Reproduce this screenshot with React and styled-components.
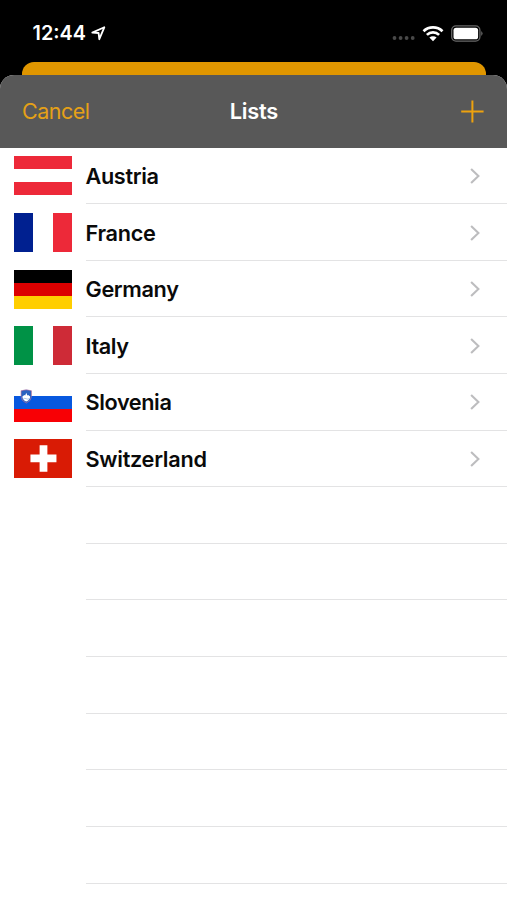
import React from 'react';
import styled, { createGlobalStyle } from 'styled-components';

const GlobalStyle = createGlobalStyle`
  * { box-sizing: border-box; }
  html, body { margin: 0; padding: 0; background: #fff; }
  body { overflow: hidden; }
`;

const Screen = styled.div`
  width: 507px;
  height: 900px;
  overflow: hidden;
  background: #000;
  font-family: Inter, 'Liberation Sans', sans-serif;
`;

const StatusBar = styled.header`
  height: 62px;
  padding: 4px 24px 0 32.6px;
  display: flex;
  align-items: center;
  justify-content: space-between;
  color: #fff;
`;

const StatusGroup = styled.div`
  display: flex;
  align-items: center;
`;

const Time = styled.span`
  width: 54.4px;
  font-size: 19.8px;
  line-height: 24px;
  font-weight: 600;
  white-space: nowrap;
`;

const LocationIcon = styled.svg`
  width: 15px;
  height: 15px;
  margin-left: 4px;
`;

const SignalIcon = styled.svg`
  width: 24px;
  height: 6px;
  margin: 10px 6px 0 0;
`;

const WifiIcon = styled.svg`
  width: 22px;
  height: 17px;
  margin-right: 7px;
`;

const BatteryIcon = styled.svg`
  width: 32px;
  height: 17px;
`;

const BackCard = styled.div`
  height: 13px;
  margin: 0 21px 0 22px;
  border-radius: 12px 12px 0 0;
  background: #e09600;
`;

const Sheet = styled.main`
  height: 825px;
  border-radius: 14px 14px 0 0;
  overflow: hidden;
  background: #fff;
`;

const NavBar = styled.nav`
  height: 72.6px;
  padding: 0 23px 0 22px;
  display: grid;
  grid-template-columns: 1fr auto 1fr;
  align-items: center;
  background: #585858;
`;

const CancelButton = styled.button`
  justify-self: start;
  padding: 0;
  border: 0;
  background: none;
  color: #e6a117;
  font: 400 21.5px/28px Inter, 'Liberation Sans', sans-serif;
  letter-spacing: -0.5px;
`;

const Title = styled.h1`
  margin: 0;
  padding-left: 1.5px;
  color: #fff;
  font-size: 21.8px;
  line-height: 28px;
  font-weight: 600;
  letter-spacing: -0.25px;
`;

const AddButton = styled.button`
  justify-self: end;
  display: flex;
  padding: 0;
  border: 0;
  background: none;
  color: #eda20e;
`;

const List = styled.ul`
  margin: 0;
  padding: 0;
  list-style: none;
`;

const Row = styled.li`
  height: 56.62px;
  padding-left: 13.5px;
  display: flex;
  align-items: center;
`;

const FlagSlot = styled.div`
  width: 72px;
  flex: none;
  display: flex;
  align-items: center;
`;

const RowContent = styled.div`
  flex: 1;
  height: 100%;
  padding: 1.3px 26px 0 0;
  display: flex;
  align-items: center;
  justify-content: space-between;
  border-bottom: 1px solid #e3e3e4;
`;

const Country = styled.span`
  color: #0a0a0a;
  font-size: 21.7px;
  line-height: 28px;
  font-weight: 600;
  letter-spacing: ${(p) => p.$tracking};
`;

const Stripes = styled.div`
  width: 58.8px;
  height: 39px;
  display: flex;
  flex-direction: ${(p) => (p.$vertical ? 'row' : 'column')};
`;

const Stripe = styled.span`
  flex: 1;
  background: ${(p) => p.$color};
`;

function StripedFlag({ colors, vertical }) {
  return (
    <Stripes $vertical={vertical}>
      {colors.map((color, i) => <Stripe key={i} $color={color} />)}
    </Stripes>
  );
}

function SloveniaFlag() {
  return (
    <svg width="58.8" height="39" viewBox="0 0 59 39">
      <path fill="#0758df" d="M0 13h59v13H0z" />
      <path fill="#f80005" d="M0 26h59v13H0z" />
      <path fill="#2a62c0" stroke="#c0709a" strokeWidth=".6" d="M7.1 7.7Q12.3 5.9 17.5 7.7v5.8q0 4.3-5.2 6.6-5.2-2.3-5.2-6.6z" />
      <path fill="#fff" d="m8.4 13.4 2-1.4.8.6 1.1-2.8 1.1 2.8.8-.6 2 1.4q-.2 3.5-3.9 5.2-3.7-1.7-3.9-5.2z" />
      <path fill="none" stroke="#7ba0d8" strokeWidth=".6" d="M9.4 15.7q1.5-.8 2.9 0t2.9 0" />
    </svg>
  );
}

function SwissFlag() {
  return (
    <svg width="58.8" height="39" viewBox="0 0 59 39">
      <path fill="#d91b05" d="M0 0h59v39H0z" />
      <path fill="#fff" d="M25.7 6.3h7.8v9.2h9.1v7.8h-9.1v9.4h-7.8v-9.4h-9.2v-7.8h9.2z" />
    </svg>
  );
}

function Chevron() {
  return (
    <svg width="12" height="18" viewBox="0 0 12 18" fill="none" stroke="#bdbdbf" strokeWidth="2.1">
      <path d="m2.1 2.1 7.3 7-7.3 7" />
    </svg>
  );
}

const countries = [
  { name: 'Austria', tracking: '-.35px', flag: <StripedFlag colors={['#ed2939', '#fff', '#ed2939']} /> },
  { name: 'France', tracking: '-.3px', flag: <StripedFlag vertical colors={['#002090', '#fff', '#ed2939']} /> },
  { name: 'Germany', tracking: '-.35px', flag: <StripedFlag colors={['#000', '#dc0000', '#ffce00']} /> },
  { name: 'Italy', tracking: '-.4px', flag: <StripedFlag vertical colors={['#009246', '#fff', '#ce2b37']} /> },
  { name: 'Slovenia', tracking: '-.4px', flag: <SloveniaFlag /> },
  { name: 'Switzerland', tracking: '-.28px', flag: <SwissFlag /> },
];

const emptyRows = Array.from({ length: 8 }, (_, i) => i);

export default function App() {
  return (
    <>
      <GlobalStyle />
      <Screen>
        <StatusBar>
          <StatusGroup>
            <Time>12:44</Time>
            <LocationIcon viewBox="0 0 15 15" fill="none" stroke="#fff" strokeWidth="1.8" strokeLinejoin="round">
              <path d="M1.3 6.6 13.3 1.3 8.3 13.2 7.6 7z" />
            </LocationIcon>
          </StatusGroup>
          <StatusGroup>
            <SignalIcon viewBox="0 0 24 6" fill="#494949">
              <circle cx="2.5" cy="3" r="1.9" />
              <circle cx="8.6" cy="3" r="1.9" />
              <circle cx="14.6" cy="3" r="1.9" />
              <circle cx="20.7" cy="3" r="1.9" />
            </SignalIcon>
            <WifiIcon viewBox="0 0 22 17" fill="none" stroke="#fff" strokeWidth="2.7">
              <path d="M1.5 6.2a13.7 13.7 0 0 1 19 0M4.9 9.9a8.8 8.8 0 0 1 12.2 0" />
              <path fill="#fff" stroke="none" d="M7.4 12.6a5.2 5.2 0 0 1 7.2 0L11 16.2z" />
            </WifiIcon>
            <BatteryIcon viewBox="0 0 32 17">
              <rect x=".7" y=".9" width="28.2" height="15.2" rx="4.3" fill="none" stroke="#686868" strokeWidth="1.3" />
              <rect x="2.5" y="2.7" width="24.6" height="11.6" rx="2.6" fill="#fff" />
              <path fill="#747474" d="M30.3 6q2.4 2.5 0 5z" />
            </BatteryIcon>
          </StatusGroup>
        </StatusBar>
        <BackCard />
        <Sheet>
          <NavBar>
            <CancelButton>Cancel</CancelButton>
            <Title>Lists</Title>
            <AddButton aria-label="Add list">
              <svg width="23" height="23" viewBox="0 0 23 23" stroke="currentColor" strokeWidth="2">
                <path d="M.2 11.5h22.4M11.4.4v22.2" />
              </svg>
            </AddButton>
          </NavBar>
          <List>
            {countries.map(({ name, tracking, flag }) => (
              <Row key={name}>
                <FlagSlot>{flag}</FlagSlot>
                <RowContent>
                  <Country $tracking={tracking}>{name}</Country>
                  <Chevron />
                </RowContent>
              </Row>
            ))}
            {emptyRows.map((i) => (
              <Row key={i}>
                <FlagSlot />
                <RowContent />
              </Row>
            ))}
          </List>
        </Sheet>
      </Screen>
    </>
  );
}
